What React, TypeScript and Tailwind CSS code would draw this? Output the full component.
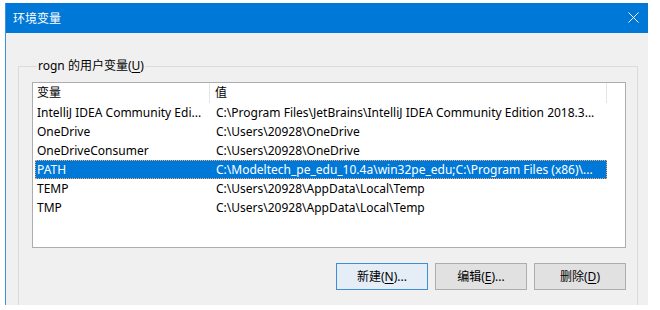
const rows = [
  { name: "IntelliJ IDEA Community Edi...", value: "C:\\Program Files\\JetBrains\\IntelliJ IDEA Community Edition 2018.3..." },
  { name: "OneDrive", value: "C:\\Users\\20928\\OneDrive" },
  { name: "OneDriveConsumer", value: "C:\\Users\\20928\\OneDrive" },
  { name: "PATH", value: "C:\\Modeltech_pe_edu_10.4a\\win32pe_edu;C:\\Program Files (x86)\\...", selected: true },
  { name: "TEMP", value: "C:\\Users\\20928\\AppData\\Local\\Temp" },
  { name: "TMP", value: "C:\\Users\\20928\\AppData\\Local\\Temp" },
];

const App = () => {
  return (
    <div className="h-[310px] w-[660px] bg-white pt-[3px] pl-[5px] text-[12px] text-black font-['Noto_Sans','Noto_Sans_CJK_SC',sans-serif]">
      <div className="flex h-[302px] w-[643px] flex-col overflow-hidden border-l border-[#3f93dc] bg-[#f0f0f0]">
        {/* title bar */}
        <div className="flex h-[30px] shrink-0 items-center justify-between bg-[#0078d7] pl-[7px] pr-[9px] text-white">
          <span className="font-['Noto_Sans_CJK_SC',sans-serif]">环境变量</span>
          <svg width="11" height="11" viewBox="0 0 11 11" className="mb-[1px]">
            <path d="M0.5 0.5 L10.5 10.5 M10.5 0.5 L0.5 10.5" stroke="white" strokeWidth="1" />
          </svg>
        </div>

        <fieldset className="ml-[12px] mt-[25px] h-[300px] w-[620px] shrink-0 border border-[#dcdcdc] pl-[13px] pr-[11px]">
          <legend className="ml-[5px] px-[1px] leading-[16px]">
            rogn 的用户变量(<span className="underline underline-offset-2">U</span>)
          </legend>

          <div className="mt-[8px] h-[166px] border border-[#abadb3] bg-white pl-[2px]">
            <div className="flex h-[20px] items-center">
              <div className="flex h-full w-[175px] items-center border-r border-[#e5e5e5] pl-[2px]">变量</div>
              <div className="flex h-full w-[397px] items-center border-r border-[#e5e5e5] pl-[5px]">值</div>
            </div>
            {rows.map((r) => (
              <div
                key={r.name}
                className={
                  r.selected
                    ? "flex h-[19px] w-[572px] items-center bg-[#0078d7] text-white outline-1 -outline-offset-1 outline-dotted outline-[#f6a96b]"
                    : "flex h-[19px] w-[572px] items-center"
                }
              >
                <div className="w-[175px] overflow-hidden whitespace-nowrap pl-[2px]">{r.name}</div>
                <div className="w-[397px] overflow-hidden whitespace-nowrap pl-[6px]">{r.value}</div>
              </div>
            ))}
          </div>

          <div className="mt-[15px] flex justify-end gap-[7px]">
            <button className="h-[27px] w-[92px] border border-[#3d8fd8] bg-[#e5eef7]">
              新建(<span className="underline underline-offset-2">N</span>)...
            </button>
            <button className="h-[27px] w-[92px] border border-[#adadad] bg-[#e1e1e1]">
              编辑(<span className="underline underline-offset-2">E</span>)...
            </button>
            <button className="h-[27px] w-[92px] border border-[#adadad] bg-[#e1e1e1]">
              删除(<span className="underline underline-offset-2">D</span>)
            </button>
          </div>
        </fieldset>
      </div>
    </div>
  );
};

export default App;
